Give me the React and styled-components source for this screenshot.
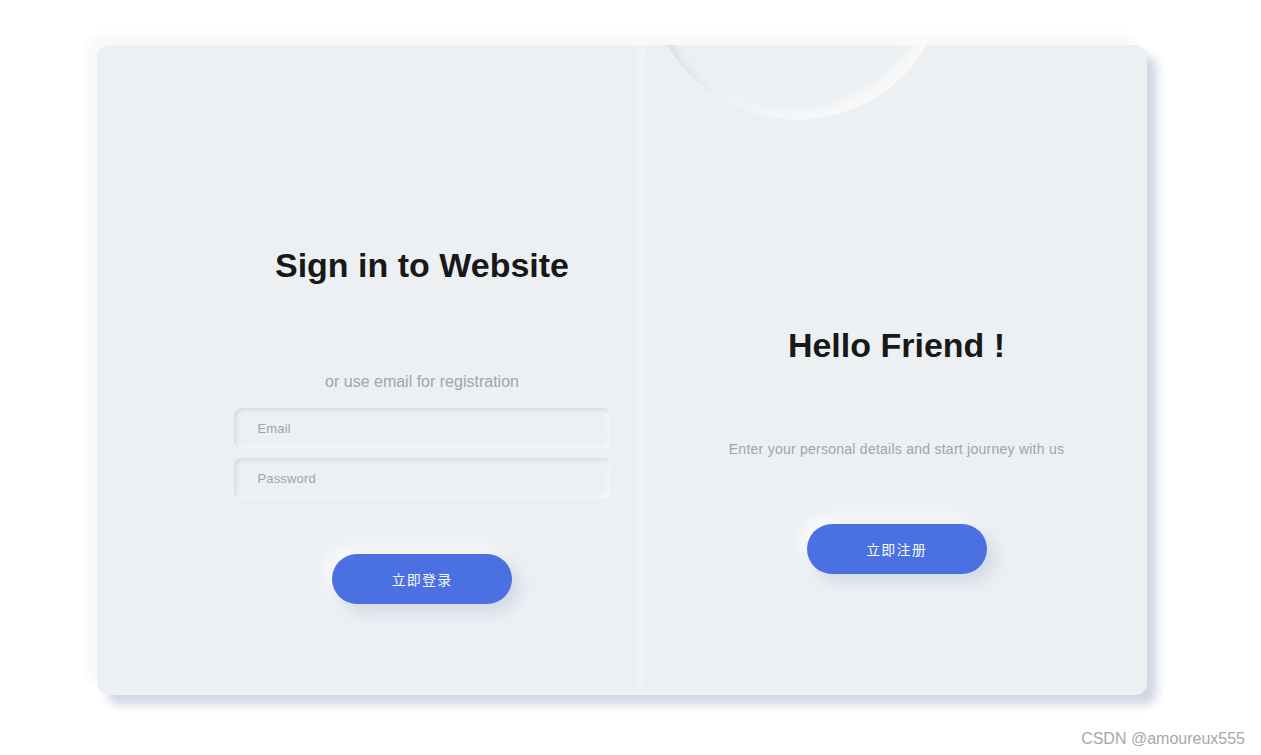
import React from 'react';
import styled, { createGlobalStyle } from 'styled-components';

const GlobalStyle = createGlobalStyle`
  body {
    margin: 0;
    background: #ffffff;
    font-family: "Liberation Sans", "Noto Sans CJK SC", Arial, sans-serif;
  }
`;

export default function App() {
  return (
    <Page>
      <GlobalStyle />
      <Card>
        <FormSide>
          <Title>Sign in to Website</Title>
          <Hint $top={87}>or use email for registration</Hint>
          <Fields>
            <Input type="text" placeholder="Email" />
            <Input type="password" placeholder="Password" />
          </Fields>
          <Action $top={55}>立即登录</Action>
        </FormSide>
        <SwitchSide>
          <Circle />
          <Title>Hello Friend !</Title>
          <Hint $top={74} $small>Enter your personal details and start journey with us</Hint>
          <Action $top={65}>立即注册</Action>
        </SwitchSide>
      </Card>
      <Watermark>CSDN @amoureux555</Watermark>
    </Page>
  );
}

const Page = styled.main`
  width: 1261px;
  height: 755px;
  box-sizing: border-box;
  padding: 45px 0 0 97px;
  overflow: hidden;
`;

const Card = styled.section`
  width: 1050px;
  height: 650px;
  display: grid;
  grid-template-columns: 549px 1fr;
  background: #ecf0f3;
  border-radius: 12px;
  overflow: hidden;
  box-shadow: 10px 10px 10px #d1d9e6, -10px -10px 10px #f9f9f9;
`;

const FormSide = styled.div`
  display: flex;
  flex-direction: column;
  align-items: center;
  padding: 200px 0 0 101px;
`;

const SwitchSide = styled.div`
  position: relative;
  z-index: 1;
  display: flex;
  flex-direction: column;
  align-items: center;
  padding-top: 280px;
  background: #ecf0f3;
  box-shadow: 4px 4px 10px #d1d9e6, -4px -4px 10px #f9f9f9;
`;

const Circle = styled.div`
  position: absolute;
  left: 1px;
  top: -225px;
  width: 300px;
  height: 300px;
  border-radius: 50%;
  background: #ecf0f3;
  box-shadow: inset 8px 8px 12px #d1d9e6, inset -8px -8px 12px #f9f9f9;
`;

const Title = styled.h2`
  margin: 0;
  font-size: 34px;
  line-height: 40px;
  font-weight: 700;
  color: #181818;
`;

const Hint = styled.p`
  margin: ${(p) => p.$top}px 0 0;
  font-size: ${(p) => (p.$small ? '14px' : '16px')};
  letter-spacing: ${(p) => (p.$small ? '0.25px' : '0')};
  line-height: 20px;
  color: #a0a5a8;
`;

const Fields = styled.div`
  display: flex;
  flex-direction: column;
  gap: 9px;
  margin-top: 16px;
`;

const Input = styled.input`
  width: 377px;
  height: 41px;
  box-sizing: border-box;
  padding-left: 24px;
  border: none;
  outline: none;
  border-radius: 8px;
  background: #ecf0f3;
  font-family: inherit;
  font-size: 13px;
  letter-spacing: 0.15px;
  color: #181818;
  box-shadow: inset 2px 2px 4px #d1d9e6, inset -2px -2px 4px #f9f9f9;

  &::placeholder {
    color: #a0a5a8;
  }
`;

const Action = styled.button`
  width: 180px;
  height: 50px;
  margin-top: ${(p) => p.$top}px;
  border: none;
  border-radius: 25px;
  background: #4b70e2;
  color: #f9f9f9;
  font-family: inherit;
  font-size: 14px;
  letter-spacing: 1.15px;
  cursor: pointer;
  box-shadow: 8px 8px 16px #d1d9e6, -8px -8px 16px #f9f9f9;
`;

const Watermark = styled.div`
  margin: 35px 16px 0 -97px;
  text-align: right;
  font-size: 16px;
  line-height: 18px;
  color: #a8a8a8;
  text-shadow: 0 0 1px #ffffff;
`;
